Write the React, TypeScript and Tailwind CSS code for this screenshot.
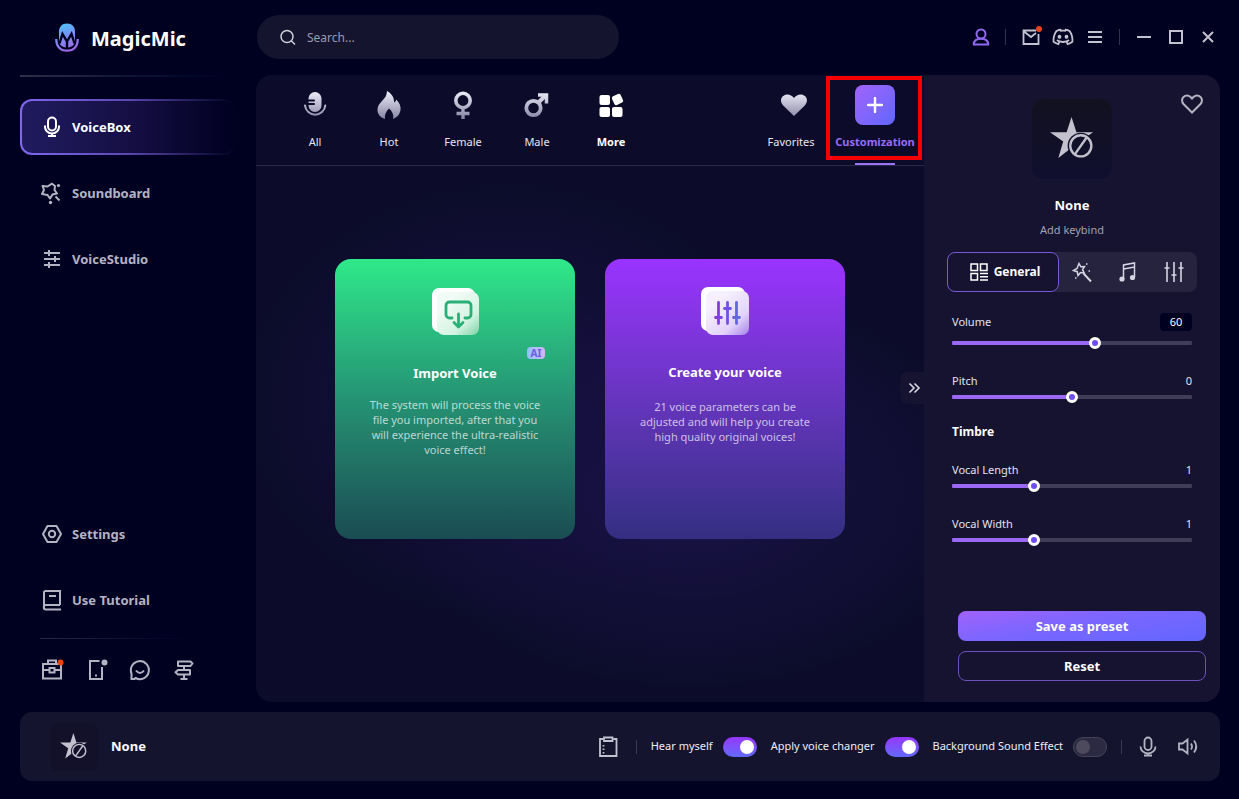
import { useState } from "react";
import type { ReactNode } from "react";
import { RiDiscordLine } from "react-icons/ri";

const stroke = {
  fill: "none",
  stroke: "currentColor",
  strokeWidth: 2,
} as const;

function Logo() {
  return (
    <svg viewBox="0 0 24 30" className="h-[30px] w-6" aria-hidden="true">
      <defs>
        <linearGradient id="logo" x1="4" y1="0" x2="16" y2="30" gradientUnits="userSpaceOnUse">
          <stop offset="0" stopColor="#4cc8fb" />
          <stop offset="0.500" stopColor="#7d8cf5" />
          <stop offset="1" stopColor="#a45fe0" />
        </linearGradient>
      </defs>
      <path
        fill="url(#logo)"
        d="M4 9c0-5.500 3-8.500 8-8.500S20 3.500 20 9v9c0 4-3.500 6.500-8 6.500S4 22 4 18z"
      />
      <path
        d="M4.500 20.500l3-9.500L12 18.500l4.500-7.500 3 9.500M12 18v7"
        fill="none"
        stroke="#000020"
        strokeWidth="2.400"
      />
      <path
        d="M1.300 16C1 23 5 27.700 12 27.700S23 23 22.700 16"
        fill="none"
        stroke="#000020"
        strokeWidth="4.500"
      />
      <path
        d="M1.300 16C1 23 5 27.700 12 27.700S23 23 22.700 16"
        fill="none"
        stroke="url(#logo)"
        strokeWidth="2.200"
      />
    </svg>
  );
}

function MicIcon({ className = "size-6" }: { className?: string }) {
  return (
    <svg viewBox="0 0 24 24" className={className} {...stroke}>
      <rect x="8" y="2.500" width="8" height="13" rx="4" />
      <path d="M5 10.500v1.500a7 6.500 0 0 0 14 0v-1.500M12 18.500v3M8 21h8" />
    </svg>
  );
}

function SoundboardIcon() {
  return (
    <svg viewBox="0 0 24 24" className="size-6" {...stroke} strokeLinejoin="round">
      <path d="M7.500 5.500l4.500-2.800 3 2.300-.5 4 2.500 3.500-4.500 1-2.500 4-2.500-3.500L2 13l2-4L2.500 5z" />
      <path d="M15.500 15.500l4 4" />
      <circle cx="18.500" cy="4.500" r="1.600" fill="currentColor" stroke="none" />
      <circle cx="10.500" cy="21.500" r="1.700" fill="currentColor" stroke="none" />
    </svg>
  );
}

function StudioIcon() {
  return (
    <svg viewBox="0 0 24 24" className="size-6" {...stroke}>
      <path d="M4 6h16M4 12h16M4 18h16M9 3v6M15 9v6M9 15v6" />
    </svg>
  );
}

function SettingsIcon() {
  return (
    <svg viewBox="0 0 24 24" className="size-6" {...stroke} strokeLinejoin="round">
      <path d="M7.500 4h9L21 12l-4.500 8h-9L3 12z" />
      <circle cx="12" cy="12" r="3.200" />
    </svg>
  );
}

function BookIcon() {
  return (
    <svg viewBox="0 0 24 24" className="size-6" {...stroke}>
      <path d="M20 17V3H5.500a1.500 1.500 0 0 0-1.500 1.500v15M20 17H6a2 2 0 0 0 0 4.500h15M9 8h7" />
    </svg>
  );
}

function StarOff({ className }: { className: string }) {
  return (
    <svg viewBox="0 0 46 46" className={className}>
      <path
        fill="#c3c1ce"
        d="M22 0l5 15.500h17L30.500 25 36 42 22 31.500 8.500 42l5-17L0 15.500h17z"
      />
      <circle cx="31.500" cy="29.500" r="13.500" fill="#12112a" />
      <circle cx="31.500" cy="29.500" r="10.800" fill="none" stroke="#c3c1ce" strokeWidth="2.400" />
      <path d="M25.500 38l12-17" stroke="#c3c1ce" strokeWidth="2.400" />
    </svg>
  );
}

function NavItem({
  icon,
  label,
  active = false,
}: {
  icon: ReactNode;
  label: string;
  active?: boolean;
}) {
  return (
    <a
      href="#"
      aria-current={active ? "page" : undefined}
      className={`flex h-14 items-center gap-2 rounded-xl border-2 border-transparent pl-[18px] text-[13px] font-bold ${
        active
          ? "text-white [background:linear-gradient(90deg,#201b5e,#160f45_50%,#000020)_padding-box,linear-gradient(90deg,#8068f0,#5a48b0_50%,#000020)_border-box]"
          : "text-[#b4b3c4]"
      }`}
    >
      {icon}
      <span className="pt-0.5">{label}</span>
    </a>
  );
}

function Sidebar() {
  return (
    <aside className="flex w-64 shrink-0 flex-col pl-5">
      <div className="flex h-[75px] items-center gap-3 pl-[35px]">
        <Logo />
        <h1 className="pt-0.5 text-xl leading-7 font-bold text-white">MagicMic</h1>
      </div>
      <div className="h-0.5 w-[216px] bg-linear-to-r from-[#302e4a] to-[#000020]" />

      <nav className="mt-[22px] mr-5 flex flex-1 flex-col gap-2.5">
        <NavItem icon={<MicIcon />} label="VoiceBox" active />
        <NavItem icon={<SoundboardIcon />} label="Soundboard" />
        <NavItem icon={<StudioIcon />} label="VoiceStudio" />
        <div className="flex-1" />
        <NavItem icon={<SettingsIcon />} label="Settings" />
        <NavItem icon={<BookIcon />} label="Use Tutorial" />
      </nav>

      <div className="mt-2.5 ml-5 h-px w-40 bg-linear-to-r from-[#2a2944] to-[#000020]" />
      <div className="flex gap-5 pt-[19px] pb-5 pl-5 text-[#b4b3c4]">
        <button type="button" aria-label="Toolbox">
          <svg viewBox="0 0 24 24" className="size-6" {...stroke}>
            <path d="M3 6h18v14.500H3zM8 6V2.500h8V6M3 12h6M15 12h6" />
            <path d="M9.500 10h5v4.500h-5z" />
            <circle cx="20.500" cy="4.500" r="3" fill="#f2420d" stroke="none" />
          </svg>
        </button>
        <button type="button" aria-label="Mobile app">
          <svg viewBox="0 0 24 24" className="size-6" {...stroke}>
            <path d="M15.500 3H6v18h12V9M11 17.500h2" />
            <circle cx="20.500" cy="4.500" r="3" fill="currentColor" stroke="none" />
          </svg>
        </button>
        <button type="button" aria-label="Feedback">
          <svg viewBox="0 0 24 24" className="size-6" {...stroke}>
            <path d="M3.500 21v-5.500A9 9 0 1 1 7.500 20l-1 1zM8 12.500q4 5 8 0" />
          </svg>
        </button>
        <button type="button" aria-label="Guide">
          <svg viewBox="0 0 24 24" className="size-6" {...stroke} strokeLinejoin="round">
            <path d="M6 3.500h12.500l2 2-2 2.500H6zM18 12H6l-2.500 2.300L6 16.500h12zM12 8v4M12 16.500V21M8.500 21h7" />
          </svg>
        </button>
      </div>
    </aside>
  );
}

function BarButton({ label, children }: { label: string; children: ReactNode }) {
  return (
    <button type="button" aria-label={label} className="flex size-8 items-center justify-center">
      {children}
    </button>
  );
}

function TopBar() {
  return (
    <header className="flex h-[75px] items-start justify-between pt-[15px]">
      <label className="ml-px flex h-11 w-[362px] items-center gap-2.5 rounded-full bg-[#15142f] pl-[22px]">
        <svg viewBox="0 0 18 18" className="size-[18px] text-[#d0cfdc]" {...stroke} strokeWidth="1.500">
          <circle cx="8" cy="8.500" r="6" />
          <path d="M12.300 12.800L16 16.500" />
        </svg>
        <input
          type="text"
          aria-label="Search"
          placeholder="Search..."
          className="h-6 min-w-0 flex-1 bg-transparent pr-5 text-xs text-white outline-none placeholder:text-[#9c9bae]"
        />
      </label>

      <div className="-mr-1 flex h-11 items-center text-[#c3c2d0]">
        <BarButton label="Account">
          <svg viewBox="0 0 18 18" className="size-[18px] text-[#9068ee]" {...stroke}>
            <circle cx="9" cy="6" r="4.500" />
            <path d="M1.800 16.500c0-4 3-5.700 7.200-5.700s7.200 1.700 7.200 5.700z" />
          </svg>
        </BarButton>
        <span className="mr-[9px] ml-2 h-4 w-px bg-[#34324c]" />
        <BarButton label="Messages">
          <svg viewBox="0 0 24 24" className="size-6" {...stroke} strokeWidth="1.800">
            <path d="M17 5.500H4.500v13.500h15V9M5 6.500l7 5.500 5-4" />
            <circle cx="20" cy="4" r="3" fill="#e8431f" stroke="none" />
          </svg>
        </BarButton>
        <BarButton label="Discord">
          <RiDiscordLine className="size-6" />
        </BarButton>
        <BarButton label="Menu">
          <svg viewBox="0 0 16 16" className="size-4" {...stroke}>
            <path d="M1 3h14M1 8h14M1 13h14" />
          </svg>
        </BarButton>
        <span className="mx-2 h-4 w-px bg-[#34324c]" />
        <BarButton label="Minimize">
          <svg viewBox="0 0 16 16" className="size-4" {...stroke}>
            <path d="M1 8h14" />
          </svg>
        </BarButton>
        <BarButton label="Maximize">
          <svg viewBox="0 0 16 16" className="size-4" {...stroke}>
            <path d="M2 2h12v12H2z" />
          </svg>
        </BarButton>
        <BarButton label="Close">
          <svg viewBox="0 0 16 16" className="size-4" {...stroke}>
            <path d="M3 3l10 10M13 3L3 13" />
          </svg>
        </BarButton>
      </div>
    </header>
  );
}

function AllIcon() {
  return (
    <svg viewBox="0 0 28 28" className="size-7">
      <path
        fill="url(#silver)"
        fillRule="evenodd"
        d="M14 1a6.500 6.500 0 0 1 6.500 6.500v7a6.500 6.500 0 0 1-13 0V14h5.500a1 1 0 0 0 0-2H7.500v-1.500h5.500a1 1 0 0 0 0-2H7.500v-1A6.500 6.500 0 0 1 14 1z"
      />
      <path
        d="M4 14.500a10.200 10.200 0 0 0 20.300 0"
        fill="none"
        stroke="url(#silver)"
        strokeWidth="2"
        strokeLinecap="round"
      />
    </svg>
  );
}

function HotIcon() {
  return (
    <svg viewBox="0 0 28 28" className="size-7">
      <path
        fill="url(#silver)"
        d="M12 0c6 3.500 7.500 8 7 11.500 1-.3 2-1.500 2.300-3 3.500 3.500 4.700 7 4.200 10.500-.6 4.500-3.500 7.500-7.500 9 1-4-.5-7.500-4-10.500-3 3-4.700 6.500-4 10.500-5-1.500-7.500-5-7.500-9.500C2.500 11 12 9 12 0z"
      />
    </svg>
  );
}

function FemaleIcon() {
  return (
    <svg viewBox="0 0 28 28" className="size-7" fill="none" stroke="url(#silver)">
      <circle cx="14" cy="9.500" r="7.200" strokeWidth="3.600" />
      <path d="M13.990 17l.02 11M7.500 22.490l13 .02" strokeWidth="3.400" />
    </svg>
  );
}

function MaleIcon() {
  return (
    <svg viewBox="0 0 28 28" className="size-7" fill="none" stroke="url(#silver)">
      <circle cx="10.500" cy="17" r="7.200" strokeWidth="3.800" />
      <path d="M15.500 11.500L22 5" strokeWidth="4" />
      <path d="M15 4h8.500v8.500" strokeWidth="3.500" />
    </svg>
  );
}

function MoreIcon() {
  return (
    <svg viewBox="0 0 28 28" className="size-7" fill="#ffffff">
      <rect x="2.500" y="4" width="10.500" height="10" rx="2" />
      <rect x="2.500" y="16" width="10.500" height="10" rx="2" />
      <rect x="15" y="16" width="10.500" height="10" rx="2" />
      <rect x="15.800" y="3.700" width="9.500" height="9.500" rx="2" transform="rotate(-25 20.500 8.500)" />
    </svg>
  );
}

const categories = [
  { label: "All", icon: <AllIcon /> },
  { label: "Hot", icon: <HotIcon /> },
  { label: "Female", icon: <FemaleIcon /> },
  { label: "Male", icon: <MaleIcon /> },
];

function Tab({
  icon,
  label,
  className = "w-[74px]",
}: {
  icon: ReactNode;
  label: string;
  className?: string;
}) {
  return (
    <button
      type="button"
      className={`flex flex-col items-center pt-2.5 text-[11px] leading-[18px] whitespace-nowrap ${className}`}
    >
      <span className="flex h-10 items-center">{icon}</span>
      <span className="mt-2">{label}</span>
    </button>
  );
}

function CategoryTabs() {
  return (
    <div className="flex h-[91px] justify-between border-b border-[#2a2848] text-[#e6e5f0]">
      <svg className="absolute size-0" aria-hidden="true">
        <defs>
          <linearGradient id="silver" x1="0" y1="0" x2="0" y2="28" gradientUnits="userSpaceOnUse">
            <stop offset="0" stopColor="#f0effa" />
            <stop offset="1" stopColor="#8683a3" />
          </linearGradient>
        </defs>
      </svg>
      <div className="flex pl-[22px]">
        {categories.map((c) => (
          <Tab key={c.label} icon={c.icon} label={c.label} />
        ))}
        <Tab icon={<MoreIcon />} label="More" className="w-[74px] font-bold text-white" />
      </div>
      <div className="flex">
        <Tab
          className="w-[70px]"
          label="Favorites"
          icon={
            <svg viewBox="0 0 28 28" className="ml-1.5 size-7">
              <path
                fill="url(#silver)"
                d="M14 25L3.200 14.500C.300 11.500.300 7 3.200 5c3.500-2.500 8-1.600 10.800 2 2.800-3.600 7.300-4.500 10.800-2 2.900 2 2.900 6.500 0 9.500z"
              />
            </svg>
          }
        />
        <div className="relative flex">
          <Tab
            className="w-[98px] font-bold text-[#976bf8]"
            label="Customization"
            icon={
              <span className="flex size-10 items-center justify-center rounded-lg bg-linear-to-br from-[#a063fb] to-[#5f66fd]">
                <svg viewBox="0 0 16 16" className="size-4">
                  <path d="M8 1v14M1 8h14" stroke="#ffffff" strokeWidth="2.400" strokeLinecap="round" />
                </svg>
              </span>
            }
          />
          <span className="pointer-events-none absolute top-px right-0.5 left-0 h-[84px] border-4 border-[#f40000]" />
          <span className="absolute bottom-0 left-[29px] h-0.5 w-10 bg-[#9a73f5]" />
        </div>
      </div>
    </div>
  );
}

function ImportIcon() {
  return (
    <svg viewBox="0 0 48 48" className="size-12">
      <defs>
        <linearGradient id="import-tile" x1="0.300" y1="0.200" x2="1" y2="1">
          <stop offset="0" stopColor="#f1fcf6" />
          <stop offset="0.600" stopColor="#d3f3e1" />
          <stop offset="1" stopColor="#7dd3a6" />
        </linearGradient>
      </defs>
      <rect x="1" y="1" width="43" height="44" rx="7" fill="#ffffff" />
      <rect x="6" y="5" width="42" height="43" rx="7" fill="url(#import-tile)" />
      <g fill="none" stroke="#2aaf76" strokeWidth="2.800" strokeLinecap="round" strokeLinejoin="round">
        <path d="M21 31h-2.500a3.500 3.500 0 0 1-3.500-3.500v-9a3.500 3.500 0 0 1 3.500-3.500h18a3.500 3.500 0 0 1 3.500 3.500v9a3.500 3.500 0 0 1-3.500 3.500H34" />
        <path d="M27.500 27V39M23 35.500l4.500 4.500L32 35.500" />
      </g>
    </svg>
  );
}

function SlidersTileIcon() {
  return (
    <svg viewBox="0 0 48 48" className="size-12">
      <defs>
        <linearGradient id="create-tile" x1="0.300" y1="0.200" x2="1" y2="1">
          <stop offset="0" stopColor="#f6f0fe" />
          <stop offset="0.600" stopColor="#e2d3fa" />
          <stop offset="1" stopColor="#a582ec" />
        </linearGradient>
        <linearGradient id="create-bars" x1="14" y1="0" x2="40" y2="0" gradientUnits="userSpaceOnUse">
          <stop offset="0" stopColor="#8638dc" />
          <stop offset="1" stopColor="#5a70e8" />
        </linearGradient>
      </defs>
      <rect x="0" y="0" width="44" height="44" rx="7" fill="#ffffff" />
      <rect x="5" y="4" width="43" height="44" rx="7" fill="url(#create-tile)" />
      <g stroke="url(#create-bars)" strokeWidth="2.800" strokeLinecap="round">
        <path d="M17.500 15.500l.01 21M26.500 15.500l.01 21M35.500 15.500l.01 21" />
        <path d="M14.500 30.500l6 .01M23.500 21.500l6 .01M32.500 30.500l6 .01" />
      </g>
    </svg>
  );
}

function VoiceCards() {
  return (
    <div className="flex justify-center gap-[30px] pt-[93px]">
      <button
        type="button"
        className="relative flex h-[280px] w-60 flex-col items-center rounded-2xl bg-linear-to-b from-[#2fe989] via-[#269b76] via-45% to-[#1a4c53] pt-7"
      >
        <ImportIcon />
        <span className="absolute top-[88px] right-[30px] flex h-3 w-[18px] items-center justify-center rounded-sm bg-linear-to-r from-[#8fc4fb] to-[#d3b4f6] text-[10px] font-bold text-[#6b5be0]">
          AI
        </span>
        <span className="mt-7 text-[13px] leading-5 font-bold text-white">Import Voice</span>
        <span className="mt-3.5 w-[180px] text-[11px] leading-[15px] text-white/70">
          The system will process the voice file you imported, after that you will experience the
          ultra-realistic voice effect!
        </span>
      </button>
      <button
        type="button"
        className="flex h-[280px] w-60 flex-col items-center rounded-2xl bg-linear-to-b from-[#9a33ff] to-[#332f82] pt-7"
      >
        <SlidersTileIcon />
        <span className="mt-[27px] text-[13px] leading-5 font-bold text-white">
          Create your voice
        </span>
        <span className="mt-[17px] w-[180px] text-[11px] leading-[15px] text-white/70">
          21 voice parameters can be adjusted and will help you create high quality original voices!
        </span>
      </button>
    </div>
  );
}

function Slider({
  label,
  initial,
  min,
  max,
  boxed = false,
}: {
  label: string;
  initial: number;
  min: number;
  max: number;
  boxed?: boolean;
}) {
  const [value, setValue] = useState(initial);
  const ratio = (value - min) / (max - min);
  // the thumb is 12px wide, so its centre travels 6px short of either end
  const stop = `calc(6px + ${ratio} * (100% - 12px))`;

  return (
    <label className="block">
      <span className="flex h-5 items-center justify-between text-[11px] text-[#e3e2ee]">
        {label}
        <output
          className={boxed ? "w-8 rounded bg-[#000020] text-center leading-[18px] text-white" : ""}
        >
          {value}
        </output>
      </span>
      <input
        type="range"
        min={min}
        max={max}
        value={value}
        onChange={(e) => setValue(Number(e.target.value))}
        style={{
          backgroundImage: `linear-gradient(90deg, #9b68f5 ${stop}, #3f3d58 ${stop})`,
        }}
        className={`block h-3 w-full appearance-none rounded-full bg-[length:100%_4px] bg-center bg-no-repeat [&::-webkit-slider-thumb]:size-3 [&::-webkit-slider-thumb]:appearance-none [&::-webkit-slider-thumb]:rounded-full [&::-webkit-slider-thumb]:border-3 [&::-webkit-slider-thumb]:border-white [&::-webkit-slider-thumb]:bg-[#6f4df0] ${
          boxed ? "mt-[5px]" : ""
        }`}
      />
    </label>
  );
}

function SettingsPanel() {
  return (
    <section className="relative flex w-[296px] shrink-0 flex-col rounded-r-2xl bg-[#15132f] pt-6 pb-[21px]">
      <button type="button" aria-label="Add to favorites" className="absolute top-[17px] right-4">
        <svg viewBox="0 0 24 24" className="size-6 text-[#b4b3c2]" {...stroke}>
          <path d="M12 20.500L3.500 12C1.500 9.800 1.600 6.700 3.500 5c2-1.900 5-1.900 7 0L12 6.500 13.500 5c2-1.900 5-1.900 7 0 1.900 1.700 2 4.800 0 7z" />
        </svg>
      </button>

      <div className="flex size-20 items-center justify-center self-center rounded-xl bg-linear-to-b from-[#12111f] to-[#100e2e]">
        <StarOff className="size-[45px]" />
      </div>
      <h2 className="mt-4 text-center text-[13px] leading-5 font-bold text-white">None</h2>
      <button type="button" className="mt-1.5 self-center text-[11px] leading-[18px] text-[#a2a1b2]">
        Add keybind
      </button>

      <div className="mt-[13px] flex h-10 w-[250px] self-center rounded-lg bg-[#25233e] text-[#d5d4e2]">
        <button
          type="button"
          className="flex w-28 items-center justify-center gap-1.5 rounded-lg border border-[#7a56d8] bg-[#15132f] pl-1 text-xs font-bold text-white"
        >
          <svg viewBox="0 0 18 18" className="size-[18px]" {...stroke} strokeWidth="1.500">
            <path d="M1 1h6.500v6.500H1zM10.500 1H17v6.500h-6.500zM1 10.500h6.500V17H1zM10 10.500h8M10 13.700h8M10 17h8" />
          </svg>
          General
        </button>
        <button type="button" aria-label="Effects" className="flex flex-1 items-center justify-center">
          <svg viewBox="0 0 22 22" className="size-[22px]" {...stroke} strokeWidth="1.500">
            <path d="M8 2.500l1.800 3.300 3.700-.3-2 3.200 1.700 3.300-3.700-.5L7 14.500l-.8-3.800L2.500 9.500 6 7.500z" />
            <path d="M12.500 12.500l7.500 8" strokeWidth="2" />
            <path d="M15 3h1.500M17.500 10H19M4 17h1.500" />
          </svg>
        </button>
        <button type="button" aria-label="Music" className="flex flex-1 items-center justify-center">
          <svg viewBox="0 0 22 22" className="size-[22px]" {...stroke} strokeWidth="1.500">
            <path d="M6.500 18V4l11-2v14M6.500 8l11-2" />
            <circle cx="5" cy="18" r="2.600" fill="currentColor" stroke="none" />
            <circle cx="15.500" cy="16.500" r="2.600" fill="currentColor" stroke="none" />
          </svg>
        </button>
        <button type="button" aria-label="Equalizer" className="flex flex-1 items-center justify-center">
          <svg viewBox="0 0 22 22" className="size-[22px]" {...stroke} strokeWidth="1.600">
            <path d="M4 1v20M11 1v20M18 1v20M1.500 7h5M8.500 14h5M15.500 7h5" />
          </svg>
        </button>
      </div>

      <div className="mt-5 px-7">
        <Slider label="Volume" initial={60} min={0} max={100} boxed />
        <div className="mt-[22px]">
          <Slider label="Pitch" initial={0} min={-12} max={12} />
        </div>
        <h3 className="mt-[19px] text-xs leading-5 font-bold text-white">Timbre</h3>
        <div className="mt-[18px] flex flex-col gap-[22px]">
          <Slider label="Vocal Length" initial={1} min={0} max={3} />
          <Slider label="Vocal Width" initial={1} min={0} max={3} />
        </div>
      </div>

      <div className="mt-auto flex flex-col gap-2.5 pt-5 pr-3.5 pl-[34px] text-[13px] font-bold text-white">
        <button
          type="button"
          className="h-[30px] rounded-lg bg-[linear-gradient(170deg,#a062fb,#7a66ff_45%,#6266ff)] pt-0.5"
        >
          Save as preset
        </button>
        <button type="button" className="h-[30px] rounded-lg border border-[#6d4fc0] pt-0.5">
          Reset
        </button>
      </div>
    </section>
  );
}

function Toggle({ label, on = false }: { label: string; on?: boolean }) {
  return (
    <label className="flex items-center gap-2.5 text-[11px] whitespace-nowrap text-[#eeedf5]">
      {label}
      <input
        type="checkbox"
        role="switch"
        defaultChecked={on}
        className="flex h-5 w-[34px] shrink-0 appearance-none items-center rounded-full border border-[#45435a] bg-[#2c2a42] px-0.5 before:size-3.5 before:rounded-full before:bg-[#4c4a5c] checked:justify-end checked:border-transparent checked:bg-linear-to-b checked:from-[#9434fb] checked:to-[#6068fa] checked:bg-origin-border checked:before:bg-white"
      />
    </label>
  );
}

function PlayerBar() {
  return (
    <footer className="mt-2.5 mr-[19px] mb-[18px] ml-5 flex h-[69px] items-center rounded-xl bg-[#15142f] pr-5 pl-[30px]">
      <div className="flex size-12 items-center justify-center rounded-lg bg-[#13112a]">
        <StarOff className="size-7" />
      </div>
      <span className="ml-[13px] text-[13px] font-bold text-white">None</span>

      <div className="ml-auto flex items-center gap-3.5">
        <button type="button" aria-label="History" className="mr-0.5 text-[#c3c2d0]">
          <svg viewBox="0 0 24 24" className="size-6" {...stroke} strokeWidth="1.800">
            <path d="M7 4H4v17h16.500V4h-3M8 2.500h8.500v3.500H8z" />
            <path d="M7.500 10v1.500M7.500 13.500V15M7.500 17v1.500" />
          </svg>
        </button>
        <span className="h-3.5 w-px bg-[#3a3852]" />
        <Toggle label="Hear myself" on />
        <Toggle label="Apply voice changer" on />
        <Toggle label="Background Sound Effect" />
        <span className="h-3.5 w-px bg-[#3a3852]" />
        <button type="button" aria-label="Microphone" className="text-[#b4b3c2]">
          <svg viewBox="0 0 24 24" className="size-6" {...stroke} strokeWidth="1.800">
            <rect x="8.500" y="2.500" width="7" height="12.500" rx="3.500" />
            <path d="M4.500 11.500a7.500 7 0 0 0 15 0M8 20.500h8" />
          </svg>
        </button>
        <button type="button" aria-label="Speaker" className="ml-0.5 text-[#b4b3c2]">
          <svg viewBox="0 0 24 24" className="size-6" {...stroke} strokeWidth="1.800">
            <path d="M3 8.500v6h3.500l5 4v-14l-5 4zM15 8.500q2 3 0 6M18 5.500q4.500 6 0 12" />
          </svg>
        </button>
      </div>
    </footer>
  );
}

export default function App() {
  return (
    <div className="flex min-h-screen flex-col bg-[#000020] font-['Noto_Sans','Open_Sans',sans-serif]">
      <div className="flex flex-1">
        <Sidebar />
        <div className="flex min-w-0 flex-1 flex-col pr-[19px]">
          <TopBar />
          <main className="flex flex-1">
            <section className="relative min-w-0 flex-1 rounded-l-2xl bg-[#0c0c2a] bg-[radial-gradient(ellipse_40%_35%_at_38%_52%,#171042_0%,transparent_100%),radial-gradient(ellipse_45%_32%_at_65%_66%,#1a1348_0%,transparent_100%)]">
              <CategoryTabs />
              <VoiceCards />
              <button
                type="button"
                aria-label="Collapse panel"
                className="absolute top-[297px] right-0 flex h-8 w-6 items-center justify-center rounded-l-lg bg-[#15132f] pl-1 text-[#d8d7e4]"
              >
                <svg viewBox="0 0 14 14" className="size-3.5" {...stroke} strokeWidth="1.600">
                  <path d="M2.500 2.500L7 7l-4.500 4.500M7.500 2.500L12 7l-4.500 4.500" />
                </svg>
              </button>
            </section>
            <SettingsPanel />
          </main>
        </div>
      </div>
      <PlayerBar />
    </div>
  );
}
